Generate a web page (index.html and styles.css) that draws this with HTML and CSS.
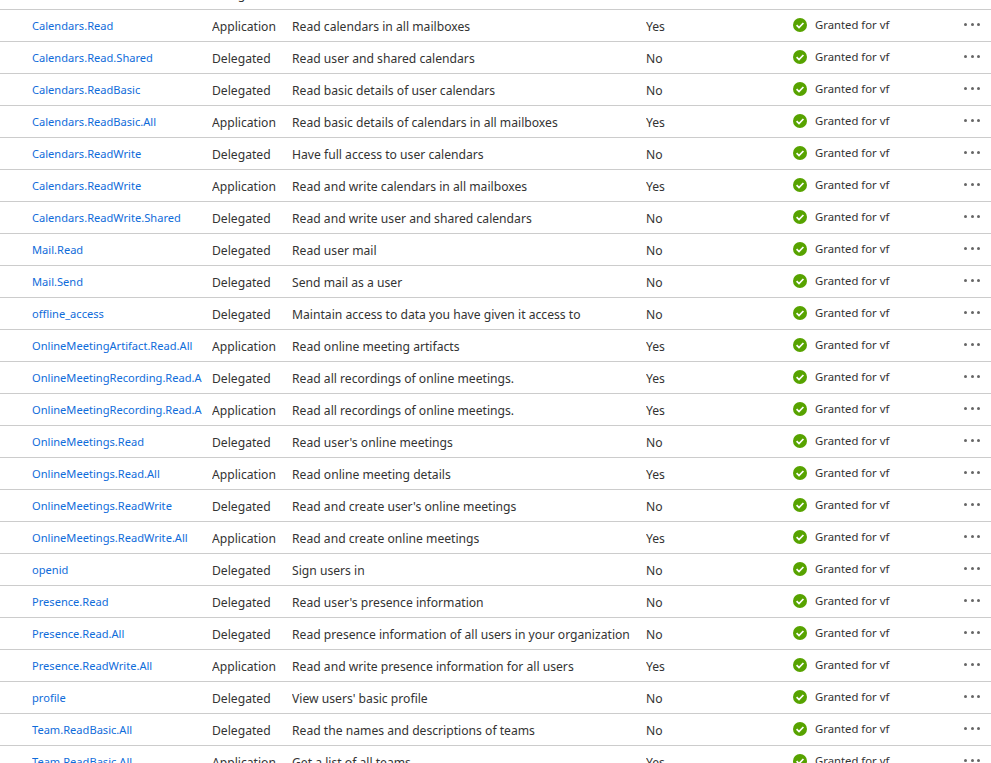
FILE: index.html
```html
<!DOCTYPE html>
<html lang="en">
<head>
<meta charset="utf-8">
<title>API permissions</title>
<link rel="stylesheet" href="styles.css">
</head>
<body>
<svg class="defs" width="0" height="0" aria-hidden="true"><symbol id="ok" viewBox="0 0 14 14"><circle cx="7" cy="7" r="7" fill="#57a300"/><path d="M3.6 7.2l2.4 2.4 4.4-4.6" fill="none" stroke="#fff" stroke-width="1.7"/></symbol></svg>
<table class="perms"><tbody id="rows"></tbody></table>
<script src="app.js"></script>
</body>
</html>
```

FILE: styles.css
```css
html, body { margin: 0; height: 100%; overflow: hidden; background: #fff; }
body { font-family: "Noto Sans", "Open Sans", sans-serif; color: #333; }
.defs { position: absolute; }
.perms { border-collapse: collapse; table-layout: fixed; width: 991px; margin-top: -23px; }
.perms td { height: 32px; padding: 3px 0 0; border-bottom: 1px solid #ccc; box-sizing: border-box; font-size: 12.15px; white-space: nowrap; overflow: hidden; }
.c-name { width: 212px; }
.c-type { width: 80px; }
.c-desc { width: 354px; }
.c-cons { width: 147px; }
.c-stat { width: 198px; }
.name { display: block; width: 170px; margin: -2px 0 0 32px; overflow: hidden; color: #0f6cda; font-size: 11.1px; text-decoration: none; }
.status { display: flex; align-items: center; gap: 8px; font-size: 11.3px; margin-top: -4px; padding-right: 11px; }
.status svg { width: 14px; height: 14px; flex: none; }
.dots { display: flex; gap: 3.5px; margin-left: auto; margin-top: -1px; }
.dots i { width: 3px; height: 3px; border-radius: 50%; background: #666; }
```

FILE: app.js
```js
const D = "Delegated", A = "Application";
const data = [
["Calendars.Read",D,"Read user calendars","No"],
["Calendars.Read",A,"Read calendars in all mailboxes","Yes"],
["Calendars.Read.Shared",D,"Read user and shared calendars","No"],
["Calendars.ReadBasic",D,"Read basic details of user calendars","No"],
["Calendars.ReadBasic.All",A,"Read basic details of calendars in all mailboxes","Yes"],
["Calendars.ReadWrite",D,"Have full access to user calendars","No"],
["Calendars.ReadWrite",A,"Read and write calendars in all mailboxes","Yes"],
["Calendars.ReadWrite.Shared",D,"Read and write user and shared calendars","No"],
["Mail.Read",D,"Read user mail","No"],
["Mail.Send",D,"Send mail as a user","No"],
["offline_access",D,"Maintain access to data you have given it access to","No"],
["OnlineMeetingArtifact.Read.All",A,"Read online meeting artifacts","Yes"],
["OnlineMeetingRecording.Read.All",D,"Read all recordings of online meetings.","Yes"],
["OnlineMeetingRecording.Read.All",A,"Read all recordings of online meetings.","Yes"],
["OnlineMeetings.Read",D,"Read user's online meetings","No"],
["OnlineMeetings.Read.All",A,"Read online meeting details","Yes"],
["OnlineMeetings.ReadWrite",D,"Read and create user's online meetings","No"],
["OnlineMeetings.ReadWrite.All",A,"Read and create online meetings","Yes"],
["openid",D,"Sign users in","No"],
["Presence.Read",D,"Read user's presence information","No"],
["Presence.Read.All",D,"Read presence information of all users in your organization","No"],
["Presence.ReadWrite.All",A,"Read and write presence information for all users","Yes"],
["profile",D,"View users' basic profile","No"],
["Team.ReadBasic.All",D,"Read the names and descriptions of teams","No"],
["Team.ReadBasic.All",A,"Get a list of all teams","Yes"]
];
document.getElementById("rows").innerHTML = data.map(([n,t,d,c]) => `<tr>
<td class="c-name"><a class="name" href="#">${n}</a></td>
<td class="c-type">${t}</td>
<td class="c-desc">${d}</td>
<td class="c-cons">${c}</td>
<td class="c-stat"><div class="status"><svg><use href="#ok"/></svg>Granted for vf<span class="dots"><i></i><i></i><i></i></span></div></td>
</tr>`).join("");
```
